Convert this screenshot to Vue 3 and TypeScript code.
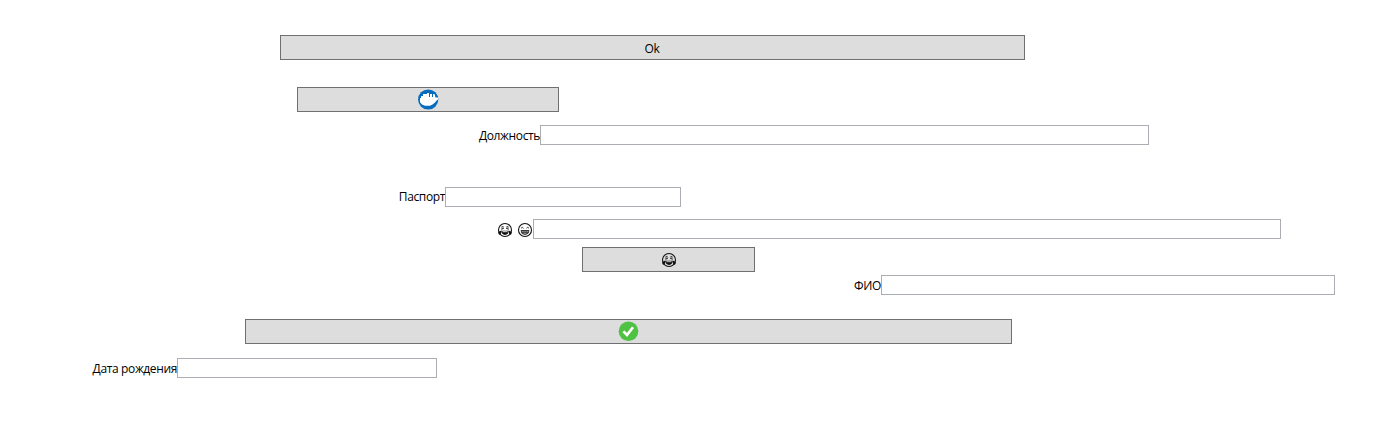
<script setup lang="ts">
</script>

<template>
  <main class="form">
    <button class="btn ok">Ok</button>
    <button class="btn docker">
      <svg width="20" height="21" viewBox="0 0 20 21">
        <circle cx="10.2" cy="10.5" r="10.1" fill="#066cbd" />
        <path d="M2 9H3V7H5V5H9V4H11V8H12V5H14V8H15V5H16.5L17.5 8.4H20V10.4L18.6 11.4L17 13.5L14.5 15.6L12 16.7H7L4 15.6L2 13.2Z" fill="#fff" />
      </svg>
    </button>
    <div class="field position"><label for="position">Должность</label><input id="position" type="text" /></div>
    <div class="field passport"><label for="passport">Паспорт</label><input id="passport" type="text" /></div>
    <div class="field faces">
      <label for="faces">
        <svg width="14" height="15" viewBox="0.5 -0.5 14 15">
          <circle cx="7.5" cy="7.5" r="6.5" class="outline" />
          <path d="M4.2 3.9L6.2 4.4M10.8 3.9L8.8 4.4M3.6 5.4L6.2 5.8L3.8 6.9M11.4 5.4L8.8 5.8L11.2 6.9" class="line" />
          <path d="M3.8 8.3H11.2Q11 12.4 7.5 12.4Q4 12.4 3.8 8.3Z" fill="#111" />
          <path d="M5 9.2H10" stroke="#fff" stroke-width=".9" />
          <path d="M3.8 8L1 9.3Q.4 12.2 2.2 12.2Q4 12 3.8 8ZM11.2 8L14 9.3Q14.6 12.2 12.8 12.2Q11 12 11.2 8Z" fill="#111" />
        </svg>
        <svg width="14" height="15" viewBox="0.5 -0.5 14 15">
          <circle cx="7.5" cy="7.5" r="6.5" class="outline" />
          <path d="M3.5 5.8Q4.8 3.8 6.1 5.8M8.9 5.8Q10.2 3.8 11.5 5.8" class="line" />
          <path d="M3.5 8H11.5Q11.3 12 7.5 12Q3.7 12 3.5 8ZM3.8 9.7H11.2M5.6 8V11.5M7.5 8V12M9.4 8V11.5" class="line" />
        </svg>
      </label>
      <input id="faces" type="text" />
    </div>
    <button class="btn laugh">
      <svg width="14" height="15" viewBox="0.5 -0.5 14 15">
        <circle cx="7.5" cy="7.5" r="6.5" class="outline" />
        <path d="M4.2 3.9L6.2 4.4M10.8 3.9L8.8 4.4M3.6 5.4L6.2 5.8L3.8 6.9M11.4 5.4L8.8 5.8L11.2 6.9" class="line" />
        <path d="M3.8 8.3H11.2Q11 12.4 7.5 12.4Q4 12.4 3.8 8.3Z" fill="#111" />
        <path d="M5 9.2H10" stroke="#ddd" stroke-width=".9" />
        <path d="M3.8 8L1 9.3Q.4 12.2 2.2 12.2Q4 12 3.8 8ZM11.2 8L14 9.3Q14.6 12.2 12.8 12.2Q11 12 11.2 8Z" fill="#111" />
      </svg>
    </button>
    <div class="field name"><label for="name">ФИО</label><input id="name" type="text" /></div>
    <button class="btn confirm">
      <svg class="check" width="20" height="20" viewBox="0 0 20 20">
        <circle cx="10.5" cy="10.3" r="9.8" fill="#4fc143" />
        <path d="M5.4 10.4L9 14L15 6.2" fill="none" stroke="#fff" stroke-width="2.7" />
      </svg>
    </button>
    <div class="field birth"><label for="birth">Дата рождения</label><input id="birth" type="text" /></div>
  </main>
</template>

<style>
body {
  background: #fff;
}
</style>

<style scoped>
.form {
  display: flex;
  flex-direction: column;
  align-items: flex-start;
  box-sizing: border-box;
  width: 1395px;
  height: 433px;
  padding-top: 35px;
  color: #000;
  font: 12px/16px "Open Sans", "Noto Sans", sans-serif;
  letter-spacing: -0.37px;
}
.btn {
  display: flex;
  flex: none;
  align-items: center;
  justify-content: center;
  box-sizing: border-box;
  height: 25px;
  padding: 0;
  border: 1px solid #707070;
  border-radius: 0;
  background: #ddd;
  color: #000;
  font: inherit;
}
.ok { width: 745px; margin-left: 280px; padding: 2px 1px 0 0; letter-spacing: -0.2px; }
.docker { width: 262px; margin: 27px 0 0 297px; }
.laugh { width: 173px; margin: 8px 0 0 582px; }
.confirm { width: 767px; margin: 24px 0 0 245px; }
.check { margin: 0 1px 1px 0; }
svg { flex: none; overflow: visible; }
.field {
  display: flex;
  flex: none;
  height: 20px;
}
.field label {
  display: flex;
  flex: none;
  justify-content: flex-end;
  padding-top: 3px;
  box-sizing: border-box;
  white-space: nowrap;
}
.field input {
  box-sizing: border-box;
  height: 20px;
  padding: 0 3px;
  border: 1px solid #abadb3;
  border-radius: 0;
  background: #fff;
  font: inherit;
  outline: none;
}
.position { margin-top: 13px; }
.position label { width: 540px; }
.position input { width: 609px; }
.passport { margin-top: 42px; }
.passport label { width: 445px; padding-top: 2px; }
.passport input { width: 236px; }
.faces { margin-top: 12px; }
.faces label { width: 533px; gap: 6px; padding-right: 1px; }
.faces input { width: 748px; }
.name { margin-top: 3px; }
.name label { width: 881px; }
.name input { width: 454px; }
.birth { margin-top: 14px; }
.birth label { width: 177px; }
.birth input { width: 260px; }
.outline { fill: none; stroke: #111; stroke-width: 1.1; }
.line { fill: none; stroke: #111; stroke-width: 0.8; }
</style>
